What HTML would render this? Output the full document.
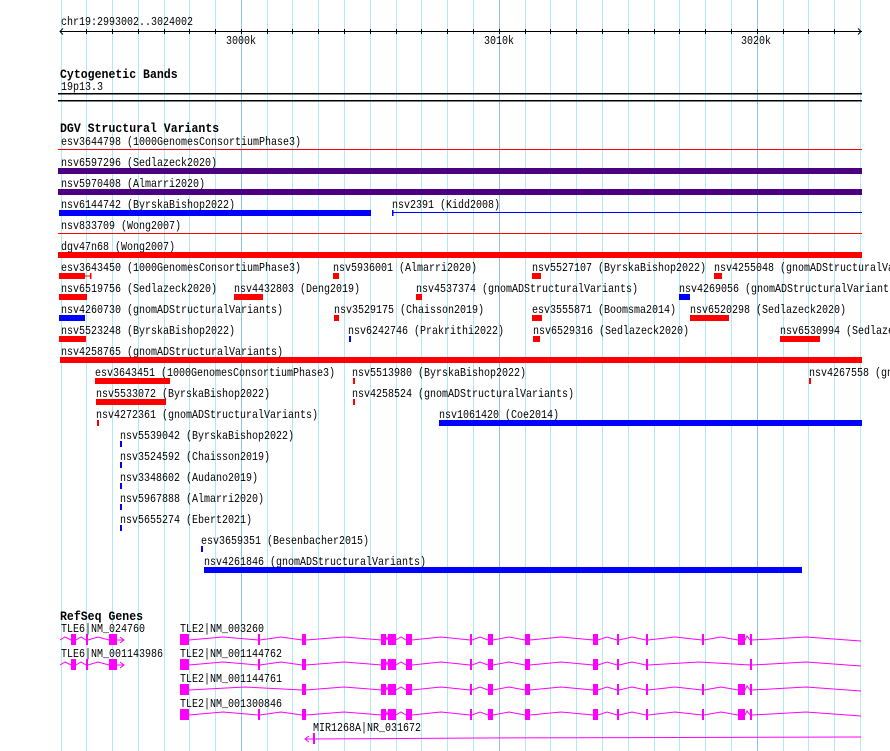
<!DOCTYPE html>
<html><head><meta charset="utf-8"><style>
html,body{margin:0;padding:0;background:#fff;overflow:hidden;}
body{width:890px;height:751px;position:relative;overflow:hidden;}
svg{position:absolute;left:0;top:0;}
.t{position:absolute;font-family:"Liberation Mono",monospace;font-size:12px;line-height:12px;white-space:pre;transform:scaleX(0.8333);transform-origin:0 0;color:#000;}
.b{position:absolute;font-family:"Liberation Mono",monospace;font-size:13px;line-height:13px;font-weight:bold;white-space:pre;transform:scaleX(0.887);transform-origin:0 0;color:#000;}
</style></head><body>
<svg width="890" height="751" viewBox="0 0 890 751">
<g stroke="#aeeaf0" stroke-width="1">
<line x1="61.5" y1="0" x2="61.5" y2="751"/><line x1="86.5" y1="0" x2="86.5" y2="751"/><line x1="112.5" y1="0" x2="112.5" y2="751"/><line x1="138.5" y1="0" x2="138.5" y2="751"/><line x1="164.5" y1="0" x2="164.5" y2="751"/><line x1="189.5" y1="0" x2="189.5" y2="751"/><line x1="215.5" y1="0" x2="215.5" y2="751"/>
<line x1="267.5" y1="0" x2="267.5" y2="751"/><line x1="292.5" y1="0" x2="292.5" y2="751"/><line x1="318.5" y1="0" x2="318.5" y2="751"/><line x1="344.5" y1="0" x2="344.5" y2="751"/><line x1="370.5" y1="0" x2="370.5" y2="751"/><line x1="396.5" y1="0" x2="396.5" y2="751"/><line x1="421.5" y1="0" x2="421.5" y2="751"/><line x1="447.5" y1="0" x2="447.5" y2="751"/><line x1="473.5" y1="0" x2="473.5" y2="751"/>
<line x1="525.5" y1="0" x2="525.5" y2="751"/><line x1="550.5" y1="0" x2="550.5" y2="751"/><line x1="576.5" y1="0" x2="576.5" y2="751"/><line x1="602.5" y1="0" x2="602.5" y2="751"/><line x1="628.5" y1="0" x2="628.5" y2="751"/><line x1="654.5" y1="0" x2="654.5" y2="751"/><line x1="679.5" y1="0" x2="679.5" y2="751"/><line x1="705.5" y1="0" x2="705.5" y2="751"/><line x1="731.5" y1="0" x2="731.5" y2="751"/>
<line x1="783.5" y1="0" x2="783.5" y2="751"/><line x1="808.5" y1="0" x2="808.5" y2="751"/><line x1="834.5" y1="0" x2="834.5" y2="751"/><line x1="860.5" y1="0" x2="860.5" y2="751"/>
</g>
<g stroke="#8cc4e0" stroke-width="1">
<line x1="241.5" y1="0" x2="241.5" y2="751"/><line x1="499.5" y1="0" x2="499.5" y2="751"/><line x1="757.5" y1="0" x2="757.5" y2="751"/>
</g>
<g stroke="#000" stroke-width="1" fill="none">
<line x1="60" y1="31.5" x2="862" y2="31.5"/>
<polyline points="63,28.5 60,31.5 63,34.5"/><polyline points="858,28.5 861,31.5 858,34.5"/>
<path d="M86.5 29v5M112.5 29v5M138.5 29v5M164.5 29v5M189.5 29v5M215.5 29v5M241.5 29v5M267.5 29v5M292.5 29v5M318.5 29v5M344.5 29v5M370.5 29v5M396.5 29v5M421.5 29v5M447.5 29v5M473.5 29v5M499.5 29v5M525.5 29v5M550.5 29v5M576.5 29v5M602.5 29v5M628.5 29v5M654.5 29v5M679.5 29v5M705.5 29v5M731.5 29v5M757.5 29v5M783.5 29v5M808.5 29v5M834.5 29v5"/>
</g>
<rect x="58" y="93" width="804" height="1.5" fill="#000"/>
<rect x="58" y="100" width="804" height="1.5" fill="#000"/>
<rect x="58" y="149" width="804" height="1" fill="#f00"/>
<rect x="58" y="168" width="804" height="6" fill="#4b0082"/>
<rect x="58" y="189" width="804" height="6" fill="#4b0082"/>
<rect x="59" y="210" width="312" height="6" fill="#00f"/>
<rect x="392" y="212" width="470" height="1" fill="#00f"/><rect x="392" y="210" width="1.5" height="6" fill="#00f"/>
<rect x="58" y="233" width="804" height="1" fill="#f00"/>
<rect x="58" y="252" width="804" height="6" fill="#f00"/>
<g fill="#f00">
<rect x="59" y="273" width="26" height="6"/><rect x="85" y="275.5" width="6" height="1"/><rect x="90" y="273" width="1.5" height="6"/>
<rect x="333" y="273" width="6" height="6"/><rect x="532" y="273" width="9" height="6"/><rect x="714" y="273" width="8" height="6"/>
<rect x="59" y="294" width="28" height="6"/><rect x="234" y="294" width="29" height="6"/><rect x="416" y="294" width="6" height="6"/>
<rect x="334" y="315" width="5" height="6"/><rect x="532" y="315" width="10" height="6"/><rect x="690" y="315" width="39" height="6"/>
<rect x="59" y="336" width="27" height="6"/><rect x="533" y="336" width="7" height="6"/><rect x="780" y="336" width="40" height="6"/>
<rect x="60" y="357" width="802" height="6"/>
<rect x="95" y="378" width="75" height="6"/><rect x="353" y="378" width="2" height="6"/><rect x="809" y="378" width="2" height="6"/>
<rect x="96" y="399" width="70" height="6"/><rect x="353" y="399" width="2" height="6"/>
<rect x="97" y="420" width="2" height="6"/>
</g>
<g fill="#00f">
<rect x="679" y="294" width="11" height="6"/>
<rect x="59" y="315" width="26" height="6"/>
<rect x="349" y="336" width="2" height="6"/>
<rect x="439" y="420" width="423" height="6"/>
<rect x="120" y="441" width="2" height="6"/><rect x="120" y="462" width="2" height="6"/><rect x="120" y="483" width="2" height="6"/><rect x="120" y="504" width="2" height="6"/><rect x="120" y="525" width="2" height="6"/>
<rect x="201" y="546" width="2" height="6"/>
<rect x="204" y="567" width="598" height="6"/>
</g>
<g fill="none" stroke="#f0f" stroke-width="1">
<polyline points="60,640 65,637 71,640 76,640 81,637 86,640 88,640 98,637 109,640 124,640"/><polyline points="120,637 124,640 120,643"/>
<polyline points="60,665 65,662 71,665 76,665 81,662 86,665 88,665 98,662 109,665 124,665"/><polyline points="120,662 124,665 120,668"/>
<polyline points="189,640 223,637 258,640 260,640 281,637 302,640 306,640 344,637 382,640 386,640 387,637 388,640 396,640 401,637 406,640 412,640 441,637 470,640 472,640 480,637 488,640 493,640 509,637 525,640 530,640 561,637 593,640 598,640 607,637 617,640 619,640 632,637 646,640 648,640 675,637 702,640 704,640 721,637 738,640 745,640 747,636 750,640 752,640 806,637 861,641"/>
<polyline points="189,665 223,662 258,665 260,665 281,662 302,665 306,665 344,662 382,665 386,665 387,662 388,665 396,665 401,662 406,665 412,665 441,662 470,665 472,665 480,662 488,665 493,665 509,662 525,665 530,665 561,662 593,665 598,665 607,662 617,665 619,665 632,662 646,665 648,665 699,662 750,665 752,665 806,662 861,666"/>
<polyline points="189,690 245,687 302,690 306,690 344,687 382,690 386,690 387,687 388,690 396,690 401,687 406,690 412,690 441,687 470,690 472,690 480,687 488,690 493,690 509,687 525,690 530,690 561,687 593,690 598,690 607,687 617,690 619,690 632,687 646,690 648,690 675,687 702,690 704,690 721,687 738,690 745,690 747,686 750,690 752,690 806,687 861,691"/>
<polyline points="189,715 223,712 258,715 260,715 281,712 302,715 306,715 344,712 382,715 386,715 387,712 388,715 396,715 401,712 406,715 412,715 441,712 470,715 472,715 480,712 488,715 493,715 509,712 525,715 530,715 561,712 593,715 598,715 607,712 617,715 619,715 632,712 646,715 648,715 675,712 702,715 704,715 721,712 738,715 745,715 747,711 750,715 752,715 806,712 861,716"/>
<polyline points="306,739 480,738 861,737"/><polyline points="309,736 305,739 309,742"/>
</g>
<g fill="#f0f">
<g id="tle6"><rect x="71" y="634" width="5" height="11"/><rect x="86" y="634" width="2" height="11"/><rect x="109" y="634" width="8" height="11"/></g>
<use href="#tle6" transform="translate(0,25)"/>
<g id="e1"><rect x="180" y="634" width="9" height="11"/><rect x="258" y="634" width="2" height="11"/><rect x="302" y="634" width="4" height="11"/><rect x="381" y="634" width="5" height="11"/><rect x="388" y="634" width="8" height="11"/><rect x="406" y="634" width="6" height="11"/><rect x="470" y="634" width="2" height="11"/><rect x="488" y="634" width="5" height="11"/><rect x="525" y="634" width="5" height="11"/><rect x="593" y="634" width="5" height="11"/><rect x="617" y="634" width="2" height="11"/><rect x="646" y="634" width="2" height="11"/><rect x="702" y="634" width="2" height="11"/><rect x="738" y="634" width="7" height="11"/><rect x="750" y="634" width="2" height="11"/></g>
<use href="#e1" transform="translate(0,75)"/>
<g transform="translate(0,25)"><rect x="180" y="634" width="9" height="11"/><rect x="258" y="634" width="2" height="11"/><rect x="302" y="634" width="4" height="11"/><rect x="381" y="634" width="5" height="11"/><rect x="388" y="634" width="8" height="11"/><rect x="406" y="634" width="6" height="11"/><rect x="470" y="634" width="2" height="11"/><rect x="488" y="634" width="5" height="11"/><rect x="525" y="634" width="5" height="11"/><rect x="593" y="634" width="5" height="11"/><rect x="617" y="634" width="2" height="11"/><rect x="646" y="634" width="2" height="11"/><rect x="750" y="634" width="2" height="11"/></g>
<g transform="translate(0,50)"><rect x="180" y="634" width="9" height="11"/><rect x="302" y="634" width="4" height="11"/><rect x="381" y="634" width="5" height="11"/><rect x="388" y="634" width="8" height="11"/><rect x="406" y="634" width="6" height="11"/><rect x="470" y="634" width="2" height="11"/><rect x="488" y="634" width="5" height="11"/><rect x="525" y="634" width="5" height="11"/><rect x="593" y="634" width="5" height="11"/><rect x="617" y="634" width="2" height="11"/><rect x="646" y="634" width="2" height="11"/><rect x="702" y="634" width="2" height="11"/><rect x="738" y="634" width="7" height="11"/><rect x="750" y="634" width="2" height="11"/></g>
<rect x="313" y="733" width="2" height="11"/>
</g>
</svg>

<div class="t" style="left:61px;top:16px">chr19:2993002..3024002</div>
<div class="t" style="left:226px;top:35px">3000k</div>
<div class="t" style="left:484px;top:35px">3010k</div>
<div class="t" style="left:741px;top:35px">3020k</div>
<div class="b" style="left:60px;top:68px">Cytogenetic Bands</div>
<div class="t" style="left:61px;top:81px">19p13.3</div>
<div class="b" style="left:60px;top:122px">DGV Structural Variants</div>

<div class="t" style="left:61px;top:136px">esv3644798 (1000GenomesConsortiumPhase3)</div>
<div class="t" style="left:61px;top:157px">nsv6597296 (Sedlazeck2020)</div>
<div class="t" style="left:61px;top:178px">nsv5970408 (Almarri2020)</div>
<div class="t" style="left:61px;top:199px">nsv6144742 (ByrskaBishop2022)</div>
<div class="t" style="left:392px;top:199px">nsv2391 (Kidd2008)</div>
<div class="t" style="left:61px;top:220px">nsv833709 (Wong2007)</div>
<div class="t" style="left:61px;top:241px">dgv47n68 (Wong2007)</div>
<div class="t" style="left:61px;top:262px">esv3643450 (1000GenomesConsortiumPhase3)</div>
<div class="t" style="left:333px;top:262px">nsv5936001 (Almarri2020)</div>
<div class="t" style="left:532px;top:262px">nsv5527107 (ByrskaBishop2022)</div>
<div class="t" style="left:714px;top:262px">nsv4255048 (gnomADStructuralVa</div>
<div class="t" style="left:61px;top:283px">nsv6519756 (Sedlazeck2020)</div>
<div class="t" style="left:234px;top:283px">nsv4432803 (Deng2019)</div>
<div class="t" style="left:416px;top:283px">nsv4537374 (gnomADStructuralVariants)</div>
<div class="t" style="left:679px;top:283px">nsv4269056 (gnomADStructuralVariants</div>
<div class="t" style="left:61px;top:304px">nsv4260730 (gnomADStructuralVariants)</div>
<div class="t" style="left:334px;top:304px">nsv3529175 (Chaisson2019)</div>
<div class="t" style="left:532px;top:304px">esv3555871 (Boomsma2014)</div>
<div class="t" style="left:690px;top:304px">nsv6520298 (Sedlazeck2020)</div>
<div class="t" style="left:61px;top:325px">nsv5523248 (ByrskaBishop2022)</div>
<div class="t" style="left:348px;top:325px">nsv6242746 (Prakrithi2022)</div>
<div class="t" style="left:533px;top:325px">nsv6529316 (Sedlazeck2020)</div>
<div class="t" style="left:780px;top:325px">nsv6530994 (Sedlaze</div>
<div class="t" style="left:61px;top:346px">nsv4258765 (gnomADStructuralVariants)</div>
<div class="t" style="left:95px;top:367px">esv3643451 (1000GenomesConsortiumPhase3)</div>
<div class="t" style="left:352px;top:367px">nsv5513980 (ByrskaBishop2022)</div>
<div class="t" style="left:809px;top:367px">nsv4267558 (gn</div>
<div class="t" style="left:96px;top:388px">nsv5533072 (ByrskaBishop2022)</div>
<div class="t" style="left:352px;top:388px">nsv4258524 (gnomADStructuralVariants)</div>
<div class="t" style="left:96px;top:409px">nsv4272361 (gnomADStructuralVariants)</div>
<div class="t" style="left:439px;top:409px">nsv1061420 (Coe2014)</div>
<div class="t" style="left:120px;top:430px">nsv5539042 (ByrskaBishop2022)</div>
<div class="t" style="left:120px;top:451px">nsv3524592 (Chaisson2019)</div>
<div class="t" style="left:120px;top:472px">nsv3348602 (Audano2019)</div>
<div class="t" style="left:120px;top:493px">nsv5967888 (Almarri2020)</div>
<div class="t" style="left:120px;top:514px">nsv5655274 (Ebert2021)</div>
<div class="t" style="left:201px;top:535px">esv3659351 (Besenbacher2015)</div>
<div class="t" style="left:204px;top:556px">nsv4261846 (gnomADStructuralVariants)</div>

<div class="b" style="left:60px;top:610px">RefSeq Genes</div>
<div class="t" style="left:61px;top:623px">TLE6|NM_024760</div>
<div class="t" style="left:61px;top:648px">TLE6|NM_001143986</div>
<div class="t" style="left:180px;top:623px">TLE2|NM_003260</div>
<div class="t" style="left:180px;top:648px">TLE2|NM_001144762</div>
<div class="t" style="left:180px;top:673px">TLE2|NM_001144761</div>
<div class="t" style="left:180px;top:698px">TLE2|NM_001300846</div>
<div class="t" style="left:313px;top:722px">MIR1268A|NR_031672</div>
</body></html>
